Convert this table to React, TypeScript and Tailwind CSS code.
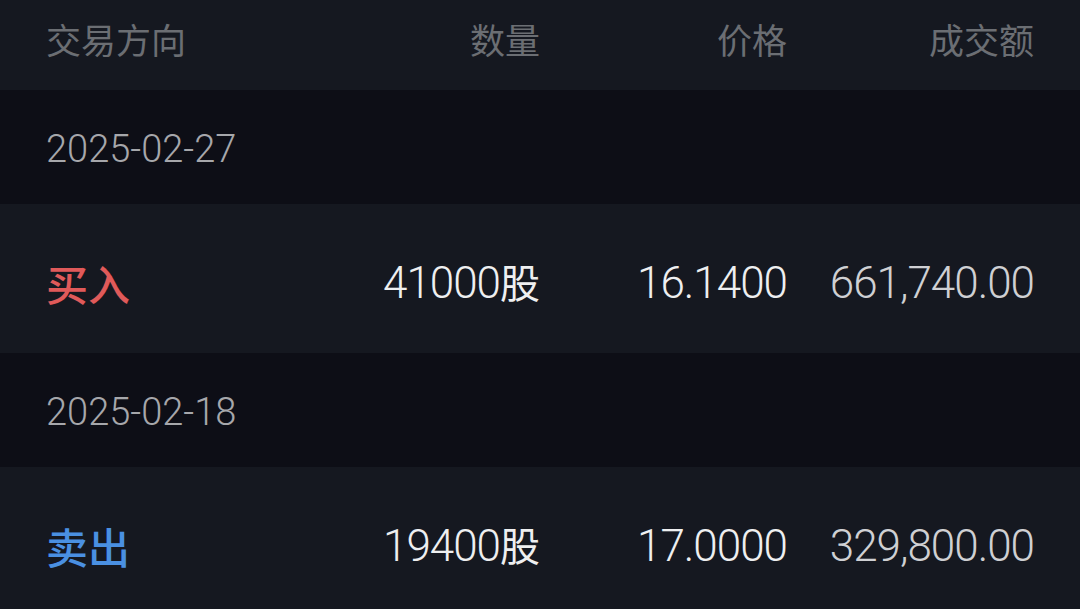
import React from "react";

function DateRow({ d }: { d: string }) {
  return (
    <div className="flex items-center px-[46px] bg-[#0d0e16] h-[114px] pt-[4px]">
      <span className="font-[family-name:Roboto,'Noto_Sans_CJK_SC',sans-serif] font-light text-[38px] leading-none text-[#a6a7ab]">{d}</span>
    </div>
  );
}

function DataRow({ side, color, qty, price, amount }: { side: string; color: string; qty: string; price: string; amount: string }) {
  return (
    <div className="grid grid-cols-4 items-center px-[46px] bg-[#151820] h-[149px] pt-[8px] font-[family-name:Roboto,'Noto_Sans_CJK_SC',sans-serif] font-light text-[44px] leading-none tracking-[-1px]">
      <span className={`font-[family-name:'Noto_Sans_CJK_SC',sans-serif] text-[42px] tracking-normal font-medium ${color}`}>{side}</span>
      <span className="text-right text-[#eeeff0]">
        {qty}
        <span className="font-[family-name:'Noto_Sans_CJK_SC',sans-serif] font-normal text-[40px] tracking-normal">股</span>
      </span>
      <span className="text-right text-[#eeeff0]">{price}</span>
      <span className="text-right text-[#cfd0d3]">{amount}</span>
    </div>
  );
}

export default function App() {
  return (
    <div className="w-[1080px] h-[609px] overflow-hidden bg-[#151820]">
      <div className="grid grid-cols-4 items-center px-[46px] h-[90px] pb-[14px] font-[family-name:'Noto_Sans_CJK_SC',sans-serif] text-[35px] leading-none text-[#6b6e73]">
        <span>交易方向</span>
        <span className="text-right">数量</span>
        <span className="text-right">价格</span>
        <span className="text-right">成交额</span>
      </div>
      <DateRow d="2025-02-27" />
      <DataRow side="买入" color="text-[#e05a5a]" qty="41000" price="16.1400" amount="661,740.00" />
      <DateRow d="2025-02-18" />
      <DataRow side="卖出" color="text-[#4a90e2]" qty="19400" price="17.0000" amount="329,800.00" />
    </div>
  );
}
